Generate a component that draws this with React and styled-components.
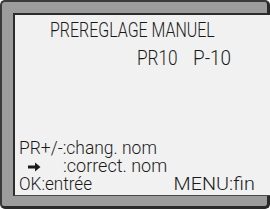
import React from 'react'
import styled, { createGlobalStyle } from 'styled-components'

const Global = createGlobalStyle`
  html, body {
    margin: 0;
    padding: 0;
    background: #fff;
  }
`

const Frame = styled.div`
  box-sizing: border-box;
  width: 270px;
  height: 209px;
  background: #9c9c9c;
  border-style: solid;
  border-color: #3a3a3a #2a2a2a #2a2a2a #3a3a3a;
  border-width: 2px 3px 3px 2px;
  border-radius: 5px;
  padding: 11px 10px 10px 11px;
  display: flex;
`

const Screen = styled.div`
  box-sizing: border-box;
  flex: 1;
  background: #f1f1f1;
  border-style: solid;
  border-color: #2c2c2c #4a4a4a #4a4a4a #2c2c2c;
  border-width: 2px 1px 1px 2px;
  display: flex;
  flex-direction: column;
  padding: 5px 14px 2px 4px;
  font-family: Roboto, "Liberation Sans", sans-serif;
  font-weight: 300;
  color: #1a1a1a;
`

const Line = styled.div`
  font-size: ${p => p.size || 18}px;
  line-height: ${p => p.lh || 18}px;
  height: ${p => p.lh || 18}px;
  margin-bottom: ${p => p.mb || 0}px;
  white-space: nowrap;
  display: flex;
  align-items: center;
  padding-left: ${p => p.indent || 0}px;
  padding-right: ${p => p.end || 0}px;
  justify-content: ${p => p.spread ? 'space-between' : 'flex-start'};
`

const Text = styled.span`
  display: inline-block;
  transform: scaleX(${p => p.sx || 1});
  transform-origin: ${p => p.right ? 'right' : 'left'} center;
`

const Cell = styled.span`
  display: inline-block;
  width: ${p => p.w}px;
`

const Spacer = styled.div`
  flex: 1;
`

const Arrow = () => (
  <svg width="13" height="10" viewBox="0 0 13 10">
    <path d="M0 3.5 H7 V0.5 L12.5 5 L7 9.5 V6.5 H0 Z" fill="#1a1a1a" />
  </svg>
)

export default function App() {
  return (
    <>
      <Global />
      <Frame>
        <Screen>
          <Line size={21} lh={21} mb={7} indent={31}>
            <Text sx={0.76}>PREREGLAGE MANUEL</Text>
          </Line>
          <Line size={21} lh={21} indent={118}>
            <Cell w={56}><Text sx={0.82}>PR10</Text></Cell>
            <Text sx={0.9}>P-10</Text>
          </Line>
          <Spacer />
          <Line><Text sx={0.97}>PR+/-:chang. nom</Text></Line>
          <Line indent={9}>
            <Cell w={35}><Arrow /></Cell>
            :correct. nom
          </Line>
          <Line spread end={12}>
            <Text sx={0.95}>OK:entrée</Text>
            <Text sx={1.1} right>MENU:fin</Text>
          </Line>
        </Screen>
      </Frame>
    </>
  )
}
